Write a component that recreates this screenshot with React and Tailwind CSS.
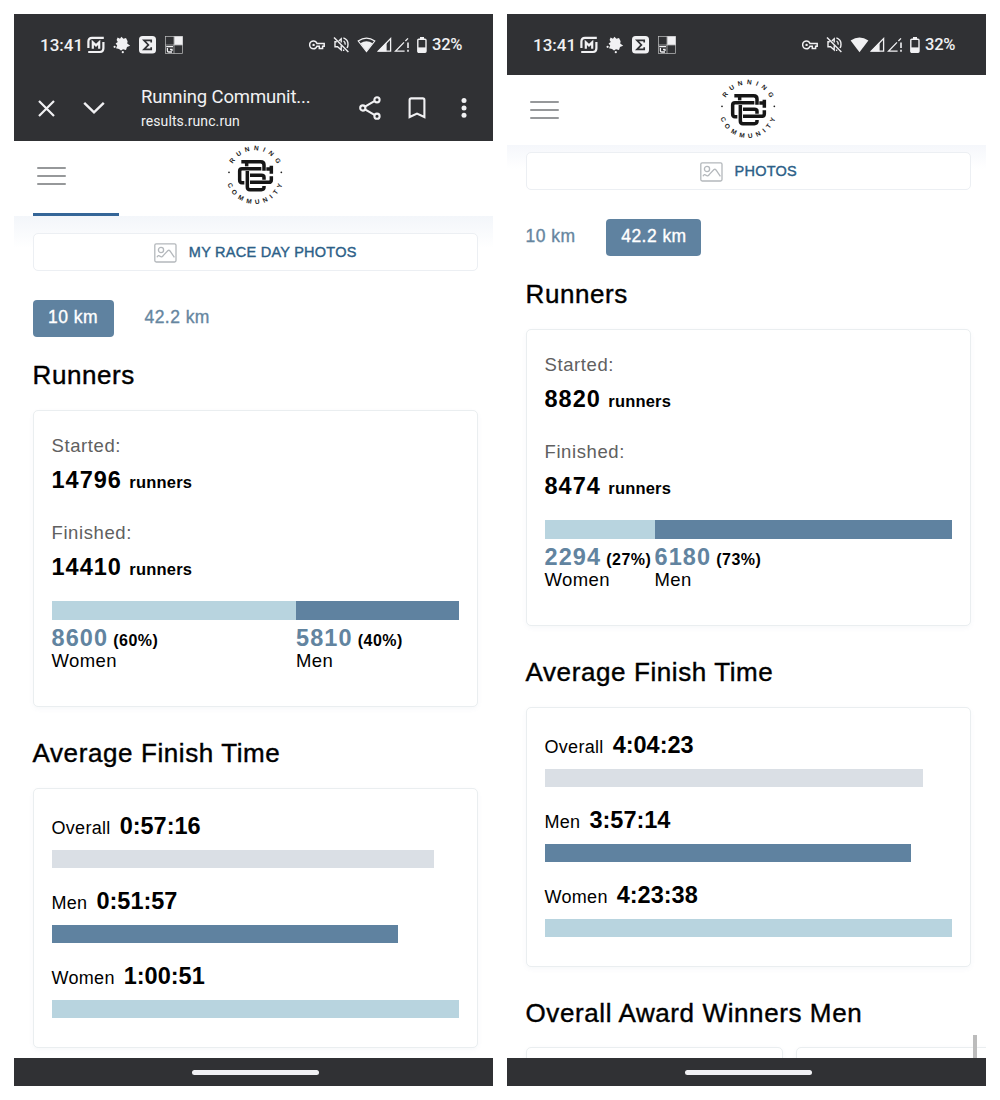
import React from 'react';

const races = {
  short: {
    started: 14796,
    finished: 14410,
    women: { count: 8600, share: 60 },
    men: { count: 5810, share: 40 },
    times: [
      { label: 'Overall', value: '0:57:16', width: 93.9, color: 'bg-[#dadfe5]' },
      { label: 'Men', value: '0:51:57', width: 85, color: 'bg-[#5f82a0]' },
      { label: 'Women', value: '1:00:51', width: 100, color: 'bg-[#b8d4df]' },
    ],
  },
  marathon: {
    started: 8820,
    finished: 8474,
    women: { count: 2294, share: 27 },
    men: { count: 6180, share: 73 },
    times: [
      { label: 'Overall', value: '4:04:23', width: 92.9, color: 'bg-[#dadfe5]' },
      { label: 'Men', value: '3:57:14', width: 90, color: 'bg-[#5f82a0]' },
      { label: 'Women', value: '4:23:38', width: 100, color: 'bg-[#b8d4df]' },
    ],
  },
};

function StatusBar({ wifiFull }) {
  return (
    <div className="h-[61px] shrink-0 bg-[#303134] flex items-center pl-[26px] pr-[30px] text-[#f1f1f3] font-['Roboto',sans-serif]">
      <span className="w-[47px] text-[17px] leading-5 font-medium">13:41</span>

      {/* Notification icons */}
      <svg width="18" height="18" viewBox="0 0 18 18" fill="none" stroke="currentColor" strokeWidth="2.2">
        <path d="M1.4 12V5.5Q1.4 1.8 5 1.8H16.8M16.4 6V12.3Q16.4 16 13 16H1.2" />
        <path d="M5.8 12.8V6.4L9 9.4L12.2 6.4V12.8" />
      </svg>
      <svg className="ml-[8px]" width="18" height="18" viewBox="0 0 18 18" fill="currentColor">
        <path d="M3.6 4L4.6 1.4L7 2.8L8.4 .8L10.4 2.8L13 2L14.6 5.2L14.2 7.6L17.2 9.8L14 11L13 14L10 13.2L8 14.6L6 13L3 12.2L4.2 9.4L2.6 7.4L4.8 6Z" />
        <circle cx="1.6" cy="10.8" r="1.1" />
        <circle cx="9.8" cy="16.2" r="1.1" />
      </svg>
      <svg className="ml-[8px]" width="17" height="18" viewBox="0 0 17 18">
        <rect width="17" height="17.6" rx="3.6" fill="currentColor" />
        <path d="M12.2 6.6V4.4H5L9.4 8.9L5 13.4H12.2V11.2" fill="none" stroke="#303134" strokeWidth="1.7" />
      </svg>
      <svg className="ml-[8.5px]" width="18" height="18" viewBox="0 0 18 18" fill="none" stroke="currentColor">
        <rect x=".5" y=".5" width="17" height="17" strokeWidth=".7" opacity=".75" />
        <path d="M.5 9H17.5M9 .5V17.5" strokeWidth=".7" opacity=".75" />
        <rect x="9.3" y=".4" width="8.3" height="8.4" fill="currentColor" stroke="none" />
        <path d="M1.2 10.6H8M2.4 12V14.8Q2.4 16 3.8 16H7M5 13.5H7V15" strokeWidth="1.3" />
      </svg>

      {/* System icons */}
      <svg className="ml-auto" width="16" height="10" viewBox="0 0 16 10" fill="none" stroke="currentColor" strokeWidth="1.5">
        <path d="M8 3.6Q7 .9 4.6 .9A3.9 3.9 0 0 0 4.6 8.8Q7 8.8 8 6.2H10.3V8.6H13.6V6.2H15.2V3.6Z" />
        <circle cx="4.6" cy="4.9" r="1.2" fill="currentColor" stroke="none" />
      </svg>
      <svg className="ml-[8px]" width="17" height="17" viewBox="0 0 17 17" fill="none" stroke="currentColor" strokeWidth="1.4">
        <path d="M1 1.4L15.4 16" />
        <path d="M3.8 5.7H2V10.8H4.6L8.2 14V9.4M5.8 5L8.2 2.8V6.4" />
        <path d="M10.4 1.9Q15.2 3.6 15 8.4Q15 10.4 14 12M10.6 5Q12.4 6 12.2 8.6M10.6 13.6V15" />
      </svg>
      <svg className="ml-[7px]" width="19" height="16" viewBox="0 0 19 16" fill="currentColor">
        {wifiFull ? (
          <path d="M.6 3.6Q9.5 -2.4 18.4 3.6L9.5 15.2Z" />
        ) : (
          <>
            <path d="M1.2 4Q9.5 -1.8 17.8 4L9.5 14.6Z" fill="none" stroke="currentColor" strokeWidth="1.2" />
            <path d="M3.4 6.2Q9.5 2.2 15.6 6.2L9.5 14.6Z" />
          </>
        )}
      </svg>
      <svg className="ml-[1px]" width="15" height="15" viewBox="0 0 15 15" fill="currentColor">
        <path d="M13.6 1.6V14.2H1.2Z" fill="none" stroke="currentColor" strokeWidth="1.3" />
        <path d="M9.6 5V14.4H.8Z" />
      </svg>
      <svg className="ml-[2px]" width="16" height="15" viewBox="0 0 16 15" fill="none" stroke="currentColor" strokeWidth="1.3">
        <path d="M10.6 14.2H1.4L10 5.4M11.4 4L14 1.4" />
        <path d="M14 5.6V11M14 12.8V14.8" strokeWidth="1.6" />
      </svg>
      <svg className="ml-[7px]" width="10" height="16" viewBox="0 0 10 16" fill="currentColor">
        <path d="M3 0H7V2H3Z" />
        <rect x=".8" y="2.2" width="8.2" height="13" rx="1" fill="none" stroke="currentColor" strokeWidth="1.4" />
        <rect x="1" y="10.4" width="8" height="4.8" />
      </svg>
      <span className="w-[31px] ml-[5px] text-[16.5px] leading-5 font-medium tracking-[-0.2px]">32%</span>
    </div>
  );
}

function BrowserBar() {
  return (
    <div className="h-[66px] shrink-0 bg-[#303134] flex items-center pl-[24px] pr-[26px] text-[#f1f1f3] font-['Roboto',sans-serif]">
      <svg width="17" height="17" viewBox="0 0 17 17" fill="none" stroke="currentColor" strokeWidth="2.2">
        <path d="M1 1L16 16M16 1L1 16" />
      </svg>
      <svg className="ml-[28px]" width="22" height="14" viewBox="0 0 22 14" fill="none" stroke="currentColor" strokeWidth="2.4">
        <path d="M1.2 1.8L11 11.4L20.8 1.8" />
      </svg>
      <div className="ml-[36px] w-[180px]">
        <div className="text-[18.5px] leading-6 tracking-[-0.15px] whitespace-nowrap">Running Communit...</div>
        <div className="mt-[1px] text-[14px] leading-[22px] tracking-[0.1px] whitespace-nowrap">results.runc.run</div>
      </div>
      <svg className="ml-[38px]" width="23" height="24" viewBox="0 0 23 24" fill="none" stroke="currentColor" strokeWidth="2.1">
        <path d="M6.4 10.4L15.4 5.2M6.4 13.6L15.4 18.8" />
        <circle cx="3.8" cy="12" r="2.6" />
        <circle cx="18" cy="3.8" r="2.6" />
        <circle cx="18" cy="20.2" r="2.6" />
      </svg>
      <svg className="ml-[26px]" width="18" height="22" viewBox="0 0 18 22" fill="none" stroke="currentColor" strokeWidth="2.1">
        <path d="M1.6 20V3Q1.6 1.4 3.2 1.4H14.8Q16.4 1.4 16.4 3V20L9 16.6Z" />
      </svg>
      <svg className="ml-auto" width="6" height="20" viewBox="0 0 6 20" fill="currentColor">
        <circle cx="3" cy="2.6" r="2.5" />
        <circle cx="3" cy="9.9" r="2.5" />
        <circle cx="3" cy="17.2" r="2.5" />
      </svg>
    </div>
  );
}

function Logo({ id }) {
  return (
    <svg width="64" height="64" viewBox="9 12 192 192">
      <defs>
        <path id={`${id}-top`} d="M31 105A74 74 0 0 1 179 105" />
        <path id={`${id}-bottom`} d="M18 105A87 87 0 0 0 192 105" />
      </defs>
      <g fill="#222" fontFamily="Liberation Sans, sans-serif" fontSize="19.5" fontWeight="700" textAnchor="middle">
        <text letterSpacing="12">
          <textPath href={`#${id}-top`} startOffset="52.5%">RUNNING</textPath>
        </text>
        <text letterSpacing="12">
          <textPath href={`#${id}-bottom`} startOffset="52%">COMMUNITY</textPath>
        </text>
        <circle cx="27" cy="97" r="2.6" />
        <circle cx="184" cy="97" r="2.6" />
      </g>
      <g fill="none" stroke="#161616" strokeWidth="10.5">
        <path d="M64 65H122Q132 65 132 75V92" />
        <path d="M80 65V79" />
        <path d="M139 87H155M154 77V101" />
        <path d="M124 86H66Q59 86 59 93V120Q59 128 66 128H73" />
        <path d="M82 93V141Q82 149 90 149H124Q132 149 132 142V138" />
        <path d="M90 106H124Q132 106 132 112V119" />
        <path d="M90 127H146Q154 127 154 119V109" />
      </g>
    </svg>
  );
}

function SiteHeader({ id, className }) {
  return (
    <div className={`shrink-0 bg-white flex pl-[23px] ${className}`}>
      <div className="w-[29px] h-[70px] flex flex-col justify-center gap-[6px]">
        <span className="h-[2px] rounded bg-[#96989a]" />
        <span className="h-[2px] rounded bg-[#96989a]" />
        <span className="h-[2px] rounded bg-[#96989a]" />
      </div>
      <div className="ml-[157px] mt-[3px]">
        <Logo id={id} />
      </div>
    </div>
  );
}

function PhotosButton({ label }) {
  return (
    <div className="h-[38px] shrink-0 rounded-[5px] border border-[#eceff3] bg-white flex items-center justify-center">
      <svg className="mt-[2px]" width="23" height="20" viewBox="0 0 23 20" fill="none" stroke="#b4b8bc" strokeWidth="1.3">
        <rect x=".8" y=".8" width="21.2" height="18.2" rx="1.4" />
        <circle cx="7" cy="7" r="2.6" />
        <path d="M3 14.2Q4.2 11.6 6 13.2T9.4 12.4L14 7.6Q15 6.8 16 8L20.4 14.4" />
      </svg>
      <span className="ml-[12px] mt-[-1px] text-[14.5px] leading-5 tracking-[0.25px] text-[#2d5f88] [-webkit-text-stroke:0.4px]">
        {label}
      </span>
    </div>
  );
}

function DistanceTab({ label, active, className }) {
  return (
    <div
      className={`h-[37px] flex justify-center rounded-[4px] text-[17.5px] leading-[34px] tracking-[0.45px] whitespace-nowrap [-webkit-text-stroke:0.35px] ${
        active ? 'bg-[#5f82a0] text-white' : 'text-[#66869f]'
      } ${className}`}
    >
      {label}
    </div>
  );
}

function Heading({ className, children }) {
  return (
    <h2 className={`shrink-0 text-[26px] leading-8 tracking-[0.6px] text-black [-webkit-text-stroke:0.4px] ${className}`}>
      {children}
    </h2>
  );
}

function Card({ className, children }) {
  return (
    <div className={`shrink-0 rounded-[5px] border border-[#eaeef0] bg-white shadow-[0_2px_5px_rgba(90,120,150,0.05)] ${className}`}>
      {children}
    </div>
  );
}

function RunnerCount({ label, value }) {
  return (
    <div>
      <div className="text-[18.5px] leading-6 tracking-[0.6px] text-[#606060]">{label}</div>
      <div className="mt-[6px] h-8 flex items-baseline font-bold text-black">
        <span className="text-[23.5px] leading-8 tracking-[1px]">{value}</span>
        <span className="ml-[7.5px] text-[16.5px] leading-5 tracking-[0.2px]">runners</span>
      </div>
    </div>
  );
}

function Share({ label, data }) {
  return (
    <div className="whitespace-nowrap" style={{ width: `${data.share}%` }}>
      <div className="h-6 flex items-baseline font-bold">
        <span className="text-[23.5px] leading-6 tracking-[1.1px] text-[#6284a0]">{data.count}</span>
        <span className="ml-[5px] text-[16px] leading-5 tracking-[0.5px] text-black">({data.share}%)</span>
      </div>
      <div className="text-[18.5px] leading-[22px] tracking-[0.4px] text-black">{label}</div>
    </div>
  );
}

function RaceStats({ race }) {
  return (
    <>
      <Heading className="mt-[22px]">Runners</Heading>
      <Card className="mt-[19px] h-[297px] px-[18px] pt-[23px]">
        <RunnerCount label="Started:" value={race.started} />
        <div className="h-[25px]" />
        <RunnerCount label="Finished:" value={race.finished} />
        <div className="mt-[18px] h-[19px] flex">
          <div className="bg-[#b8d4df]" style={{ width: `${race.women.share}%` }} />
          <div className="flex-1 bg-[#5f82a0]" />
        </div>
        <div className="mt-[6px] flex">
          <Share label="Women" data={race.women} />
          <Share label="Men" data={race.men} />
        </div>
      </Card>

      <Heading className="mt-[30px]">Average Finish Time</Heading>
      <Card className="mt-[19px] h-[260px] px-[18px] pt-[21px]">
        {race.times.map((t) => (
          <div key={t.label} className="h-[75px]">
            <div className="h-8 flex items-baseline text-black">
              <span className="text-[18px] leading-6 tracking-[0.3px]">{t.label}</span>
              <span className="ml-[9px] text-[23.5px] leading-8 font-bold">{t.value}</span>
            </div>
            <div className={`mt-[8px] h-[18px] ${t.color}`} style={{ width: `${t.width}%` }} />
          </div>
        ))}
      </Card>
    </>
  );
}

function HomeBar() {
  return (
    <div className="h-[28px] shrink-0 bg-[#303134] flex items-center justify-center">
      <div className="w-[127px] h-[5px] rounded-full bg-[#f1f1f4] mr-[-3px]" />
    </div>
  );
}

export default function App() {
  return (
    <div className="w-[1000px] h-[1100px] bg-white p-[14px] flex gap-[14px] overflow-hidden font-['Liberation_Sans',Arial,sans-serif]">
      {/* 10 km results, opened in the in-app browser */}
      <div className="w-[479px] h-[1072px] flex flex-col">
        <StatusBar />
        <BrowserBar />
        <SiteHeader id="left" className="h-[72px]" />
        <div className="h-[3px] shrink-0 pl-[19px]">
          <div className="w-[86px] h-[2.5px] bg-[#356698]" />
        </div>
        <div className="flex-1 min-h-0 overflow-hidden pl-[18.5px] pr-[15px] pt-[17px] flex flex-col bg-linear-to-b from-[#f3f6fa] to-white to-[32px]">
          <PhotosButton label="MY RACE DAY PHOTOS" />
          <div className="mt-[29px] shrink-0 flex">
            <DistanceTab label="10 km" active className="w-[81px]" />
            <DistanceTab label="42.2 km" className="ml-[31px]" />
          </div>
          <RaceStats race={races.short} />
        </div>
        <HomeBar />
      </div>

      {/* 42.2 km results, scrolled further down */}
      <div className="w-[479px] h-[1072px] flex flex-col">
        <StatusBar wifiFull />
        <SiteHeader id="right" className="h-[70px]" />
        <div className="relative flex-1 min-h-0 overflow-hidden pl-[18.5px] pr-[15px] pt-[7px] flex flex-col bg-linear-to-b from-[#f5f7fb] to-white to-[24px]">
          <PhotosButton label="PHOTOS" />
          <div className="mt-[28.6px] shrink-0 flex">
            <DistanceTab label="10 km" />
            <DistanceTab label="42.2 km" active className="ml-[31px] w-[95px]" />
          </div>
          <RaceStats race={races.marathon} />
          <Heading className="mt-[30.4px]">Overall Award Winners Men</Heading>
          <div className="mt-[18px] shrink-0 flex gap-[13px] w-[520px]">
            <Card className="w-[257px] h-[80px]" />
            <Card className="w-[257px] h-[80px]" />
          </div>
          <div className="absolute right-[9px] bottom-0 w-[4px] h-[23px] bg-[#bcbcbc]" />
        </div>
        <HomeBar />
      </div>
    </div>
  );
}
